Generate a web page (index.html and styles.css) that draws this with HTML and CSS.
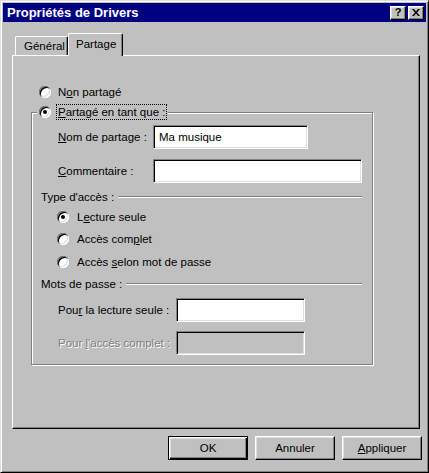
FILE: index.html
```html
<!DOCTYPE html>
<html lang="fr">
<head>
<meta charset="utf-8">
<title>Propriétés de Drivers</title>
<link rel="stylesheet" href="styles.css">
</head>
<body>
<div class="window">
  <div class="titlebar">
    <span class="title">Propriétés de Drivers</span>
    <span class="tbtn help">?</span>
    <span class="tbtn close">
      <svg width="8" height="7" viewBox="0 0 8 7"><path d="M0 0h2l2 2.5L6 0h2L5 3.5 8 7H6L4 4.5 2 7H0l3-3.5z" fill="#000"/></svg>
    </span>
  </div>

  <div class="tabs">
    <div class="tab">Général</div>
    <div class="tab active">Partage</div>
  </div>

  <div class="panel">
    <div class="radio-row top">
      <span class="radio"></span>
      <span class="rlabel">N<u>o</u>n partagé</span>
    </div>

    <div class="group">
      <div class="legend">
        <span class="radio checked"></span>
        <span class="focus"><u>P</u>artagé en tant que :</span>
      </div>

      <div class="field-row first">
        <label class="flabel w95"><u>N</u>om de partage :</label>
        <input class="tinput w155" type="text" value="Ma musique">
      </div>
      <div class="field-row r2">
        <label class="flabel w95"><u>C</u>ommentaire :</label>
        <input class="tinput w209" type="text" value="">
      </div>

      <div class="heading h1">
        <span>Type d'accès :</span>
        <span class="rule"></span>
      </div>
      <div class="radio-row opt o1">
        <span class="radio checked"></span>
        <span class="rlabel">L<u>e</u>cture seule</span>
      </div>
      <div class="radio-row opt o2">
        <span class="radio"></span>
        <span class="rlabel">Accès com<u>p</u>let</span>
      </div>
      <div class="radio-row opt o3">
        <span class="radio"></span>
        <span class="rlabel">Accès <u>s</u>elon mot de passe</span>
      </div>

      <div class="heading h2">
        <span>Mots de passe :</span>
        <span class="rule"></span>
      </div>
      <div class="field-row p1">
        <label class="flabel w118">Pou<u>r</u> la lecture seule :</label>
        <input class="tinput w129" type="text" value="">
      </div>
      <div class="field-row p2 disabled">
        <label class="flabel w118">Pour <u>l</u>'accès complet :</label>
        <input class="tinput w129" type="text" value="" disabled>
      </div>
    </div>
  </div>

  <div class="buttons">
    <button class="btn default">OK</button>
    <button class="btn">Annuler</button>
    <button class="btn"><u>A</u>ppliquer</button>
  </div>
</div>
</body>
</html>
```

FILE: styles.css
```css
html, body {
  margin: 0;
  padding: 0;
  background: #c0c0c0;
}

.window {
  width: 429px;
  height: 473px;
  box-sizing: border-box;
  background: #c0c0c0;
  border: 1px solid;
  border-color: #dfdfdf #000 #000 #dfdfdf;
  box-shadow: inset 1px 1px 0 #fff, inset -1px -1px 0 #808080;
  padding: 2px;
  font-family: "Liberation Sans", Arial, sans-serif;
  font-size: 11.5px;
  color: #000;
  display: flex;
  flex-direction: column;
}

/* Title bar */
.titlebar {
  height: 19px;
  background: #000080;
  color: #fff;
  display: flex;
  align-items: center;
  padding: 0 2px 0 4px;
  gap: 2px;
  flex: none;
}
.title {
  font-weight: bold;
  font-size: 13px;
  flex: 1;
  white-space: nowrap;
}
.tbtn {
  width: 16px;
  height: 14px;
  box-sizing: border-box;
  background: #c0c0c0;
  border: 1px solid;
  border-color: #fff #000 #000 #fff;
  box-shadow: inset -1px -1px 0 #808080, inset 1px 1px 0 #dfdfdf;
  display: flex;
  align-items: center;
  justify-content: center;
  color: #000;
  font-weight: bold;
  font-size: 11px;
  line-height: 1;
}

/* Tabs */
.tabs {
  display: flex;
  align-items: flex-end;
  height: 22px;
  margin: 11px 0 0 9px;
  flex: none;
}
.tab {
  height: 19px;
  box-sizing: border-box;
  border-top: 1px solid #fff;
  border-left: 1px solid #fff;
  border-right: 1px solid #000;
  box-shadow: inset -1px 0 0 #808080;
  border-radius: 2px 2px 0 0;
  display: flex;
  align-items: center;
  white-space: nowrap;
}
.tab:first-child {
  margin-left: 3px;
  width: 53px;
  padding-left: 8px;
}
.tab.active {
  width: 55px;
  height: 23px;
  margin-bottom: -1px;
  padding-left: 7px;
  padding-bottom: 2px;
  background: #c0c0c0;
  position: relative;
  z-index: 1;
}

/* Panel */
.panel {
  width: 408px;
  height: 374px;
  margin-left: 9px;
  box-sizing: border-box;
  border: 1px solid;
  border-color: #fff #000 #000 #fff;
  box-shadow: inset -1px -1px 0 #808080;
  padding: 29px 0 0 18px;
  flex: none;
}

.radio-row {
  display: flex;
  align-items: center;
  height: 14px;
}
.radio-row.top {
  margin-left: 8px;
  gap: 7px;
}

.radio {
  width: 12px;
  height: 12px;
  border-radius: 50%;
  background: #fff;
  box-shadow: inset 1px 1px 0 #808080, inset -1px -1px 0 #fff,
              inset 2px 2px 0 #000, inset -2px -2px 0 #dfdfdf;
  position: relative;
  flex: none;
}
.radio.checked::after {
  content: "";
  position: absolute;
  left: 4px;
  top: 4px;
  width: 4px;
  height: 4px;
  border-radius: 50%;
  background: #000;
}

/* Group box */
.group {
  width: 342px;
  box-sizing: border-box;
  margin-top: 13px;
  border: 1px solid #808080;
  box-shadow: inset 1px 1px 0 #fff, 1px 1px 0 #fff;
  padding: 0 0 9px 0;
}
.legend {
  display: flex;
  align-items: center;
  gap: 6px;
  width: fit-content;
  height: 14px;
  margin: -8px 0 0 5px;
  padding: 0 2px;
  background: #c0c0c0;
}
.focus {
  outline: 1px dotted #000;
  outline-offset: 0;
  padding: 0 1px;
  line-height: 14px;
}

.field-row {
  display: flex;
  align-items: center;
  height: 24px;
  padding-left: 26px;
}
.field-row.first { margin-top: 6px; }
.field-row.r2 { margin-top: 10px; }
.field-row.p1 { margin-top: 7px; }
.field-row.p2 { margin-top: 9px; }

.flabel { white-space: nowrap; flex: none; }
.w95 { width: 95px; }
.w118 { width: 118px; }

.tinput {
  height: 24px;
  box-sizing: border-box;
  border: 1px solid;
  border-color: #808080 #fff #fff #808080;
  box-shadow: inset 1px 1px 0 #000, inset -1px -1px 0 #dfdfdf;
  background: #fff;
  font-family: "Liberation Sans", Arial, sans-serif;
  font-size: 11.5px;
  color: #000;
  padding: 0 5px;
  margin: 0;
  outline: none;
  flex: none;
}
.w155 { width: 155px; }
.w209 { width: 209px; }
.w129 { width: 129px; }

.disabled .flabel {
  color: #808080;
  text-shadow: 1px 1px 0 #fff;
}
.disabled .tinput {
  background: #c0c0c0;
}

.heading {
  display: flex;
  align-items: center;
  height: 14px;
  margin-left: 9px;
  margin-right: 10px;
  white-space: nowrap;
}
.heading.h1 { margin-top: 7px; }
.heading.h2 { margin-top: 8px; }
.rule {
  flex: 1;
  height: 0;
  border-top: 1px solid #808080;
  border-bottom: 1px solid #fff;
  margin-left: 4px;
}

.radio-row.opt {
  margin-left: 25px;
  gap: 8px;
}
.radio-row.o1 { margin-top: 6px; }
.radio-row.o2 { margin-top: 8px; }
.radio-row.o3 { margin-top: 9px; }

/* Buttons */
.buttons {
  display: flex;
  justify-content: flex-end;
  gap: 7px;
  margin-top: 7px;
  padding-right: 4px;
  flex: none;
}
.btn {
  width: 80px;
  height: 24px;
  box-sizing: border-box;
  background: #c0c0c0;
  border: 1px solid;
  border-color: #fff #000 #000 #fff;
  box-shadow: inset -1px -1px 0 #808080, inset 1px 1px 0 #dfdfdf;
  font-family: "Liberation Sans", Arial, sans-serif;
  font-size: 11.5px;
  color: #000;
  padding: 0;
  margin: 0;
}
.btn.default {
  border-color: #000;
  box-shadow: inset 1px 1px 0 #fff, inset -1px -1px 0 #000,
              inset -2px -2px 0 #808080, inset 2px 2px 0 #dfdfdf;
}
```
